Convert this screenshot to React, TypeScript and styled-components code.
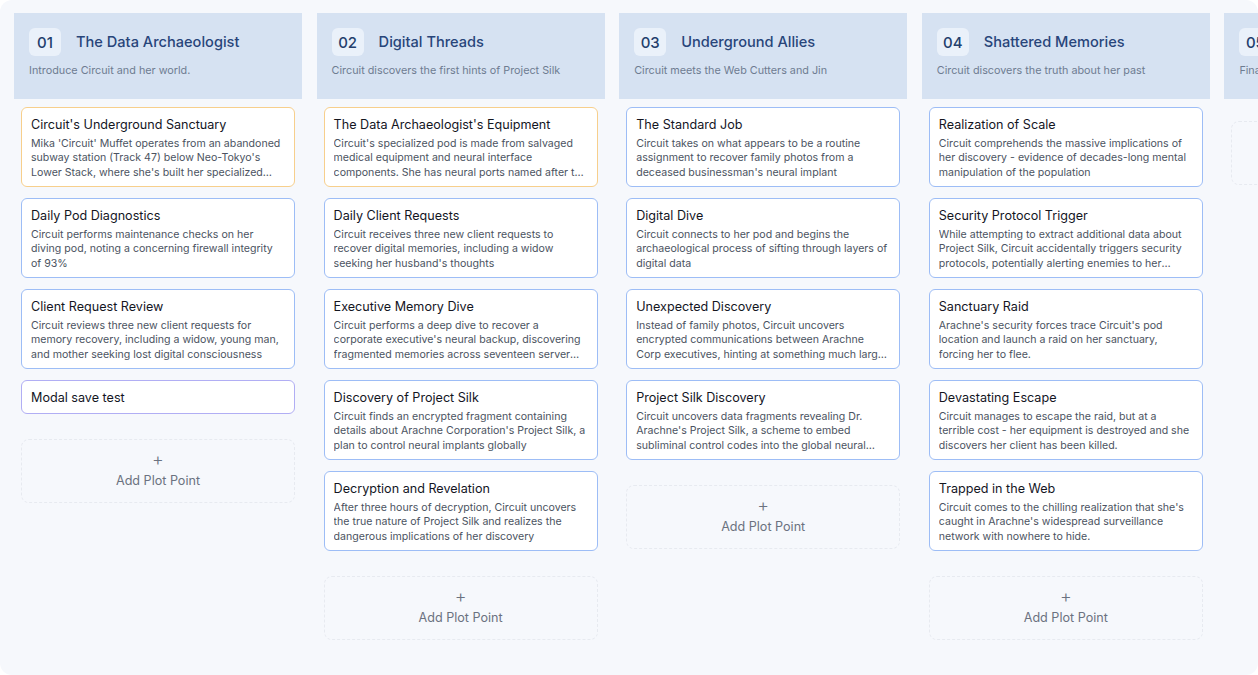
import styled, { createGlobalStyle } from "styled-components";

const GlobalStyle = createGlobalStyle`
  html, body {
    margin: 0;
    padding: 0;
    background: #ffffff;
  }
  body {
    font-family: Inter, "Noto Sans", Arial, sans-serif;
    -webkit-font-smoothing: antialiased;
  }
  * { box-sizing: border-box; }
`;

type Tone = "orange" | "blue" | "purple";

type PlotPoint = {
  title: string;
  text?: string;
  tone: Tone;
};

type Act = {
  num: string;
  title: string;
  subtitle: string;
  points: PlotPoint[];
};

const acts: Act[] = [
  {
    num: "01",
    title: "The Data Archaeologist",
    subtitle: "Introduce Circuit and her world.",
    points: [
      {
        title: "Circuit's Underground Sanctuary",
        text: "Mika 'Circuit' Muffet operates from an abandoned subway station (Track 47) below Neo-Tokyo's Lower Stack, where she's built her specialized diving pod from salvaged parts",
        tone: "orange",
      },
      {
        title: "Daily Pod Diagnostics",
        text: "Circuit performs maintenance checks on her diving pod, noting a concerning firewall integrity of 93%",
        tone: "blue",
      },
      {
        title: "Client Request Review",
        text: "Circuit reviews three new client requests for memory recovery, including a widow, young man, and mother seeking lost digital consciousness",
        tone: "blue",
      },
      { title: "Modal save test", tone: "purple" },
    ],
  },
  {
    num: "02",
    title: "Digital Threads",
    subtitle: "Circuit discovers the first hints of Project Silk",
    points: [
      {
        title: "The Data Archaeologist's Equipment",
        text: "Circuit's specialized pod is made from salvaged medical equipment and neural interface components. She has neural ports named after the old subway lines",
        tone: "orange",
      },
      {
        title: "Daily Client Requests",
        text: "Circuit receives three new client requests to recover digital memories, including a widow seeking her husband's thoughts",
        tone: "blue",
      },
      {
        title: "Executive Memory Dive",
        text: "Circuit performs a deep dive to recover a corporate executive's neural backup, discovering fragmented memories across seventeen server farms",
        tone: "blue",
      },
      {
        title: "Discovery of Project Silk",
        text: "Circuit finds an encrypted fragment containing details about Arachne Corporation's Project Silk, a plan to control neural implants globally",
        tone: "blue",
      },
      {
        title: "Decryption and Revelation",
        text: "After three hours of decryption, Circuit uncovers the true nature of Project Silk and realizes the dangerous implications of her discovery",
        tone: "blue",
      },
    ],
  },
  {
    num: "03",
    title: "Underground Allies",
    subtitle: "Circuit meets the Web Cutters and Jin",
    points: [
      {
        title: "The Standard Job",
        text: "Circuit takes on what appears to be a routine assignment to recover family photos from a deceased businessman's neural implant",
        tone: "blue",
      },
      {
        title: "Digital Dive",
        text: "Circuit connects to her pod and begins the archaeological process of sifting through layers of digital data",
        tone: "blue",
      },
      {
        title: "Unexpected Discovery",
        text: "Instead of family photos, Circuit uncovers encrypted communications between Arachne Corp executives, hinting at something much larger at play",
        tone: "blue",
      },
      {
        title: "Project Silk Discovery",
        text: "Circuit uncovers data fragments revealing Dr. Arachne's Project Silk, a scheme to embed subliminal control codes into the global neural network",
        tone: "blue",
      },
    ],
  },
  {
    num: "04",
    title: "Shattered Memories",
    subtitle: "Circuit discovers the truth about her past",
    points: [
      {
        title: "Realization of Scale",
        text: "Circuit comprehends the massive implications of her discovery - evidence of decades-long mental manipulation of the population",
        tone: "blue",
      },
      {
        title: "Security Protocol Trigger",
        text: "While attempting to extract additional data about Project Silk, Circuit accidentally triggers security protocols, potentially alerting enemies to her location",
        tone: "blue",
      },
      {
        title: "Sanctuary Raid",
        text: "Arachne's security forces trace Circuit's pod location and launch a raid on her sanctuary, forcing her to flee.",
        tone: "blue",
      },
      {
        title: "Devastating Escape",
        text: "Circuit manages to escape the raid, but at a terrible cost - her equipment is destroyed and she discovers her client has been killed.",
        tone: "blue",
      },
      {
        title: "Trapped in the Web",
        text: "Circuit comes to the chilling realization that she's caught in Arachne's widespread surveillance network with nowhere to hide.",
        tone: "blue",
      },
    ],
  },
  {
    num: "05",
    title: "Final Thread",
    subtitle: "Final confrontation with Arachne",
    points: [],
  },
];

const toneBorder: Record<Tone, string> = {
  orange: "#f7cf8c",
  blue: "#9dbdf6",
  purple: "#b1aef4",
};

const Board = styled.div`
  height: 675px;
  border-radius: 12px;
  background: #f6f8fc;
  overflow: hidden;
  display: flex;
  align-items: flex-start;
  gap: 14.6px;
  padding: 13px 14px;
`;

const Column = styled.section`
  width: 288px;
  flex-shrink: 0;
  display: flex;
  flex-direction: column;
`;

const Header = styled.header`
  height: 86px;
  background: #d6e2f2;
  padding: 15px 15px 0;
`;

const HeaderRow = styled.div`
  display: flex;
  align-items: center;
  gap: 15px;
`;

const Badge = styled.span`
  width: 32px;
  height: 28px;
  border-radius: 6px;
  background: #eaf1fa;
  color: #243f6d;
  font-size: 15px;
  font-weight: 500;
  display: flex;
  align-items: center;
  justify-content: center;
`;

const ActTitle = styled.h2`
  margin: 0;
  font-size: 14.6px;
  font-weight: 500;
  color: #28457a;
  white-space: nowrap;
`;

const ActSubtitle = styled.p`
  margin: 7px 0 0;
  font-size: 10.8px;
  line-height: 16px;
  color: #6e7c91;
  white-space: nowrap;
`;

const CardList = styled.div`
  display: flex;
  flex-direction: column;
  gap: 11px;
  padding: 8px 7px;
`;

const Card = styled.div<{ $tone: Tone }>`
  background: #ffffff;
  border: 1px solid ${(p) => toneBorder[p.$tone]};
  border-radius: 6px;
  padding: 7.5px 9px 6px;
`;

const CardTitle = styled.h3`
  margin: 0;
  font-size: 12.6px;
  line-height: 18px;
  font-weight: 400;
  color: #14161f;
`;

const CardText = styled.p`
  margin: 3px 0 0;
  font-size: 10.6px;
  line-height: 14.5px;
  color: #4b5361;
  display: -webkit-box;
  -webkit-line-clamp: 3;
  -webkit-box-orient: vertical;
  overflow: hidden;
`;

const AddButton = styled.button`
  margin-top: 14px;
  height: 64px;
  border: 1px dashed #e7eaf0;
  border-radius: 8px;
  background: transparent;
  display: flex;
  flex-direction: column;
  align-items: center;
  justify-content: center;
  gap: 6px;
  font-family: inherit;
  color: #6b7280;
  font-size: 12.6px;
  line-height: 16px;
  cursor: pointer;
`;

const Plus = styled.span`
  font-size: 18px;
  line-height: 14px;
  font-weight: 300;
`;

export default function App() {
  return (
    <>
      <GlobalStyle />
      <Board>
        {acts.map((act) => (
          <Column key={act.num}>
            <Header>
              <HeaderRow>
                <Badge>{act.num}</Badge>
                <ActTitle>{act.title}</ActTitle>
              </HeaderRow>
              <ActSubtitle>{act.subtitle}</ActSubtitle>
            </Header>
            <CardList>
              {act.points.map((pt) => (
                <Card key={pt.title} $tone={pt.tone}>
                  <CardTitle>{pt.title}</CardTitle>
                  {pt.text && <CardText>{pt.text}</CardText>}
                </Card>
              ))}
              <AddButton>
                <Plus>+</Plus>
                Add Plot Point
              </AddButton>
            </CardList>
          </Column>
        ))}
      </Board>
    </>
  );
}
